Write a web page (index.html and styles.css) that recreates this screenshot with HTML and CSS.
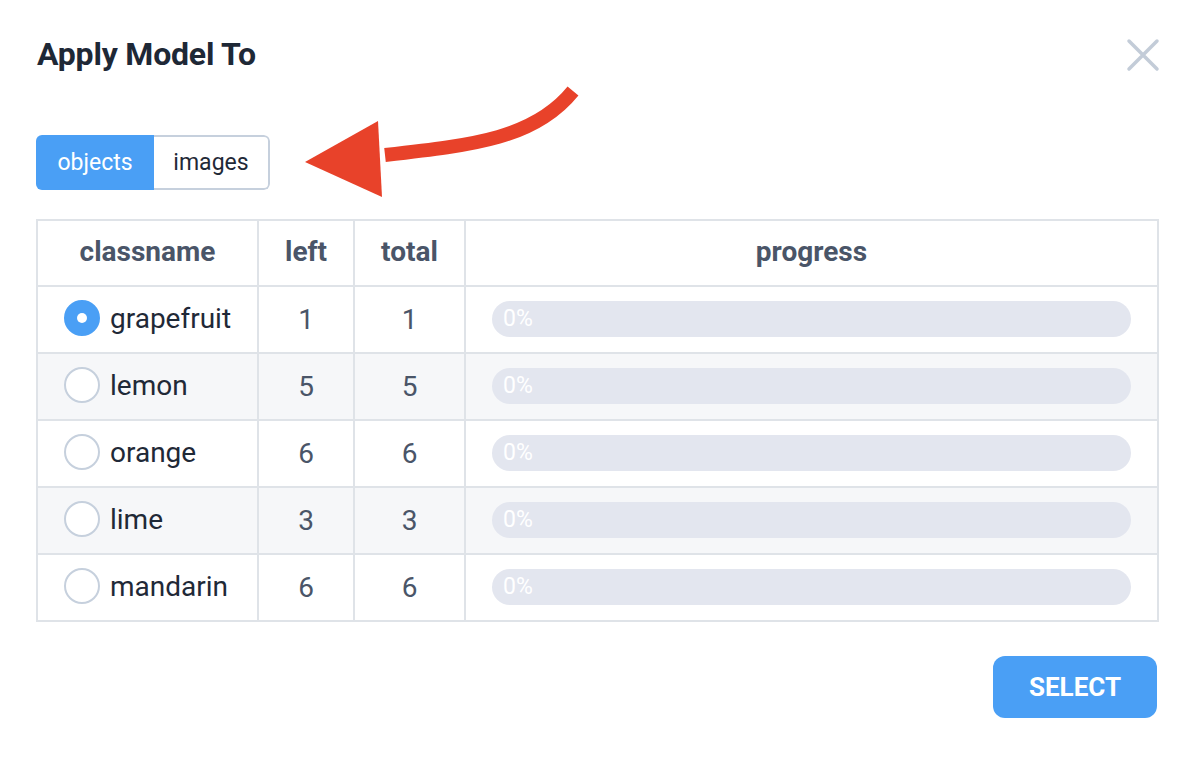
FILE: index.html
```html
<!DOCTYPE html>
<html>
<head>
<meta charset="utf-8">
<link rel="stylesheet" href="styles.css">
</head>
<body>
<div class="modal">
  <div class="header">
    <h1 class="title">Apply Model To</h1>
    <svg class="close" width="34" height="34" viewBox="0 0 34 34"><path d="M3 3 L31 31 M31 3 L3 31" stroke="#c3ccd8" stroke-width="3.5" stroke-linecap="round"/></svg>
  </div>
  <div class="toolbar">
    <div class="toggle">
      <span class="seg active">objects</span>
      <span class="seg">images</span>
    </div>
    <svg class="arrow" width="300" height="130" viewBox="0 0 300 130">
      <path d="M268 8 C 230 55, 170 62, 80 72" fill="none" stroke="#e8422a" stroke-width="14"/>
      <polygon points="0,79 73,38 77,114" fill="#e8422a"/>
    </svg>
  </div>
  <table class="grid">
    <colgroup><col class="c1"><col class="c2"><col class="c3"><col class="c4"></colgroup>
    <thead>
      <tr><th>classname</th><th>left</th><th>total</th><th>progress</th></tr>
    </thead>
    <tbody>
      <tr><td class="name"><span class="radio on"></span>grapefruit</td><td class="num">1</td><td class="num">1</td><td><div class="bar">0%</div></td></tr>
      <tr><td class="name"><span class="radio"></span>lemon</td><td class="num">5</td><td class="num">5</td><td><div class="bar">0%</div></td></tr>
      <tr><td class="name"><span class="radio"></span>orange</td><td class="num">6</td><td class="num">6</td><td><div class="bar">0%</div></td></tr>
      <tr><td class="name"><span class="radio"></span>lime</td><td class="num">3</td><td class="num">3</td><td><div class="bar">0%</div></td></tr>
      <tr><td class="name"><span class="radio"></span>mandarin</td><td class="num">6</td><td class="num">6</td><td><div class="bar">0%</div></td></tr>
    </tbody>
  </table>
  <div class="footer">
    <button class="select">SELECT</button>
  </div>
</div>
</body>
</html>
```
FILE: styles.css
```css
html, body { margin: 0; padding: 0; background: #fff; }
body { font-family: Roboto, "Noto Sans", sans-serif; color: #1f2937; }
.modal { padding: 34px 37px 0 37px; width: 1122px; }
.header { display: flex; justify-content: space-between; align-items: flex-start; }
.title { margin: 0; font-size: 32px; font-weight: 700; color: #1e2836; line-height: 40px; letter-spacing: -0.2px; }
.close { margin-top: 4px; margin-right: -1px; }
.toolbar { display: flex; align-items: flex-start; margin-top: 25px; height: 120px; }
.toggle { display: flex; height: 55px; border-radius: 6px; overflow: hidden; margin-top: 36px; margin-left: -1px; }
.seg { display: flex; align-items: center; justify-content: center; font-size: 23px; color: #1f2937; background: #fff; border: 2px solid #c6d0dd; border-left: none; border-radius: 0 6px 6px 0; width: 116px; box-sizing: border-box; }
.seg.active { background: #4a9ff5; color: #fff; border: none; border-radius: 0; width: 118px; }
.arrow { margin-left: 35px; margin-top: -16px; }
.grid { border-collapse: collapse; width: 1123px; table-layout: fixed; margin: 0 0 0 -1px; }
.c1 { width: 221px; } .c2 { width: 96px; } .c3 { width: 111px; }
.grid th, .grid td { border: 2px solid #dfe3e8; height: 64px; padding: 0 0 1px 0; text-align: center; font-size: 28px; }
.grid th { font-weight: 700; color: #4a5568; height: 61px; padding-bottom: 3px; }
.grid tbody tr:nth-child(even) { background: #f6f7f9; }
.grid td.name { text-align: left; color: #1f2937; padding-left: 26px; }
.grid td.num { color: #4a5568; }
.radio { display: inline-block; vertical-align: middle; width: 32px; height: 32px; border-radius: 50%; border: 2px solid #c6d0dd; background: #fff; margin-right: 10px; margin-top: -4px; position: relative; }
.radio.on { background: #4a9ff5; border-color: #4a9ff5; }
.radio.on::after { content: ""; position: absolute; left: 11px; top: 11px; width: 10px; height: 10px; border-radius: 50%; background: #fff; }
.bar { margin: 0 26px 0 26px; height: 36px; border-radius: 18px; background: #e3e6ef; color: #fff; font-size: 23px; line-height: 36px; text-align: left; padding-left: 11px; }
.footer { display: flex; justify-content: flex-end; margin-top: 34px; }
.select { width: 164px; height: 62px; border: none; border-radius: 12px; background: #4a9ff5; color: #fff; font-family: Roboto, sans-serif; font-weight: 700; font-size: 26px; margin-right: 2px; }
```
